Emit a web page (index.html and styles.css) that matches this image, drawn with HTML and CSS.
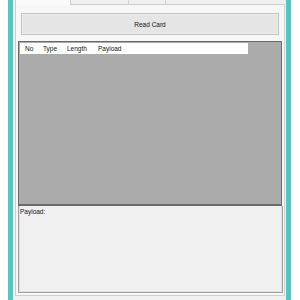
FILE: index.html
```html
<!DOCTYPE html>
<html lang="en">
<head>
    <meta charset="UTF-8">
    <title>Card Reader</title>
    <link rel="stylesheet" href="styles.css">
</head>
<body>
    <div class="frame">
        <!-- Abas -->
        <div class="tabs">
            <div class="tab active"></div>
            <div class="tab"></div>
            <div class="tab"></div>
            <div class="tab-rest"></div>
        </div>

        <div class="page">
            <button class="read-btn">Read Card</button>

            <div class="list">
                <div class="list-header">
                    <span>No</span>
                    <span>Type</span>
                    <span>Length</span>
                    <span>Payload</span>
                </div>
            </div>

            <div class="payload">
                <label>Payload:</label>
            </div>
        </div>
    </div>
</body>
</html>
```

FILE: styles.css
```css
body, html {
    margin: 0;
    padding: 0;
    background: #ffffff;
    font-family: "Liberation Sans", Arial, sans-serif;
    width: 300px;
    height: 300px;
    overflow: hidden;
}

.frame {
    margin-left: 8px;
    width: 273px;
    height: 300px;
    border-left: 5px solid #4ec9c9;
    border-right: 5px solid #4ec9c9;
    background: #f0f0f0;
    display: flex;
    flex-direction: column;
}

.tabs {
    display: flex;
    height: 5px;
    margin-left: 2px;
    margin-right: 1px;
}

.tab {
    border-right: 1px solid #d0d0d0;
    border-bottom: 1px solid #d0d0d0;
    background: #f0f0f0;
}

.tab:nth-child(1) {
    width: 54px;
    border-left: 1px solid #d0d0d0;
    border-bottom: none;
    background: #fafafa;
}

.tab:nth-child(2) {
    width: 57px;
}

.tab:nth-child(3) {
    width: 36px;
}

.tab-rest {
    flex: 1;
    border-bottom: 1px solid #d0d0d0;
}

.page {
    margin: 0 1px 4px 2px;
    flex: 1;
    border: 1px solid #d0d0d0;
    border-top: none;
    background: #f7f7f7;
    display: flex;
    flex-direction: column;
}

.read-btn {
    margin: 8px 5px 0 5px;
    height: 22px;
    background: #e5e5e5;
    border: 1px solid #c4c4c4;
    box-shadow: inset 0 0 0 1px #ececec;
    font-family: "Liberation Sans", Arial, sans-serif;
    font-size: 6.5px;
    color: #111;
    padding: 0;
}

.list {
    margin: 6px 2px 0 2px;
    height: 162px;
    border: 1px solid #6a6a6a;
    border-bottom-width: 2px;
    background: #ababab;
}

.list-header {
    display: grid;
    grid-template-columns: 18px 24px 31px 1fr;
    width: 228px;
    height: 11px;
    margin: 1px 0 0 1px;
    background: #ffffff;
    font-size: 6.5px;
    line-height: 11px;
    color: #111;
}

.list-header span {
    padding-left: 5px;
}

.payload {
    margin: 0 1px 2px 2px;
    flex: 1;
    border: 1px solid #a0a0a0;
    border-top: none;
    box-shadow: inset 1px 0 0 #e0e0e0, inset -1px -1px 0 #e0e0e0;
    background: #f0f0f0;
    padding: 1px 1px;
    font-size: 6.5px;
    line-height: 9px;
}

.payload label {
    color: #111;
}
```
